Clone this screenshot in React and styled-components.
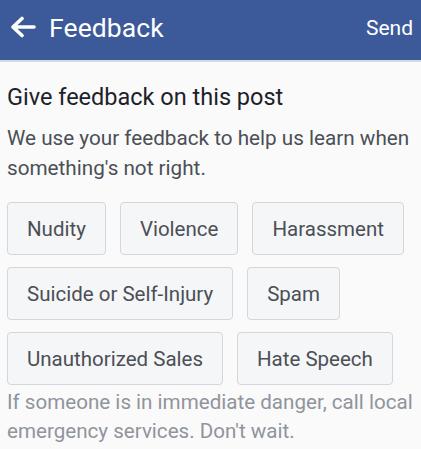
import React from 'react';
import styled, { createGlobalStyle } from 'styled-components';

const GlobalStyle = createGlobalStyle`
  body {
    margin: 0;
    background: #fafafa;
    font-family: Roboto, "Liberation Sans", sans-serif;
  }
`;

const Page = styled.div`
  width: 421px;
  min-height: 449px;
  background: #fafafa;
`;

const TopBar = styled.div`
  height: 62px;
  display: flex;
  align-items: center;
  justify-content: space-between;
  padding: 0 8px 6px 10px;
  box-sizing: border-box;
  background: #3c5a99;
  border-bottom: 2px solid #d4d9e3;
  color: #ffffff;
`;

const TitleGroup = styled.div`
  display: flex;
  align-items: center;
  gap: 13px;
`;

const Title = styled.span`
  font-size: 26.5px;
  letter-spacing: 0.1px;
`;

const SendLink = styled.span`
  font-size: 21px;
  margin-top: 2px;
`;

const Body = styled.div`
  padding: 20px 7px 0 7px;
`;

const Heading = styled.div`
  font-size: 23.5px;
  color: #1d2129;
  line-height: 30px;
`;

const Intro = styled.div`
  margin-top: 11px;
  font-size: 20.7px;
  line-height: 30px;
  color: #4b4f56;
`;

const Options = styled.div`
  display: flex;
  flex-wrap: wrap;
  gap: 12px 14px;
  margin-top: 19px;
`;

const Option = styled.button`
  height: 53px;
  padding: 0 19px;
  border: 1px solid #d3d6db;
  border-radius: 4px;
  background: #f5f6f7;
  color: #4b4f56;
  font-family: Roboto, "Liberation Sans", sans-serif;
  font-size: 20.5px;
`;

const Note = styled.div`
  margin-top: 3px;
  font-size: 20.6px;
  line-height: 29px;
  color: #90949c;
`;

const BackArrow = () => (
  <svg width="26" height="22" viewBox="0 0 26 22" fill="none">
    <path d="M24 11H4M12 2.5L3 11l9 8.5" stroke="#fff" strokeWidth="3.6" strokeLinecap="round" strokeLinejoin="round" />
  </svg>
);

const reasons = [
  'Nudity',
  'Violence',
  'Harassment',
  'Suicide or Self-Injury',
  'Spam',
  'Unauthorized Sales',
  'Hate Speech',
];

export default function App() {
  return (
    <Page>
      <GlobalStyle />
      <TopBar>
        <TitleGroup>
          <BackArrow />
          <Title>Feedback</Title>
        </TitleGroup>
        <SendLink>Send</SendLink>
      </TopBar>
      <Body>
        <Heading>Give feedback on this post</Heading>
        <Intro>We use your feedback to help us learn when something's not right.</Intro>
        <Options>
          {reasons.map((r) => (
            <Option key={r}>{r}</Option>
          ))}
        </Options>
        <Note>If someone is in immediate danger, call local emergency services. Don't wait.</Note>
      </Body>
    </Page>
  );
}
